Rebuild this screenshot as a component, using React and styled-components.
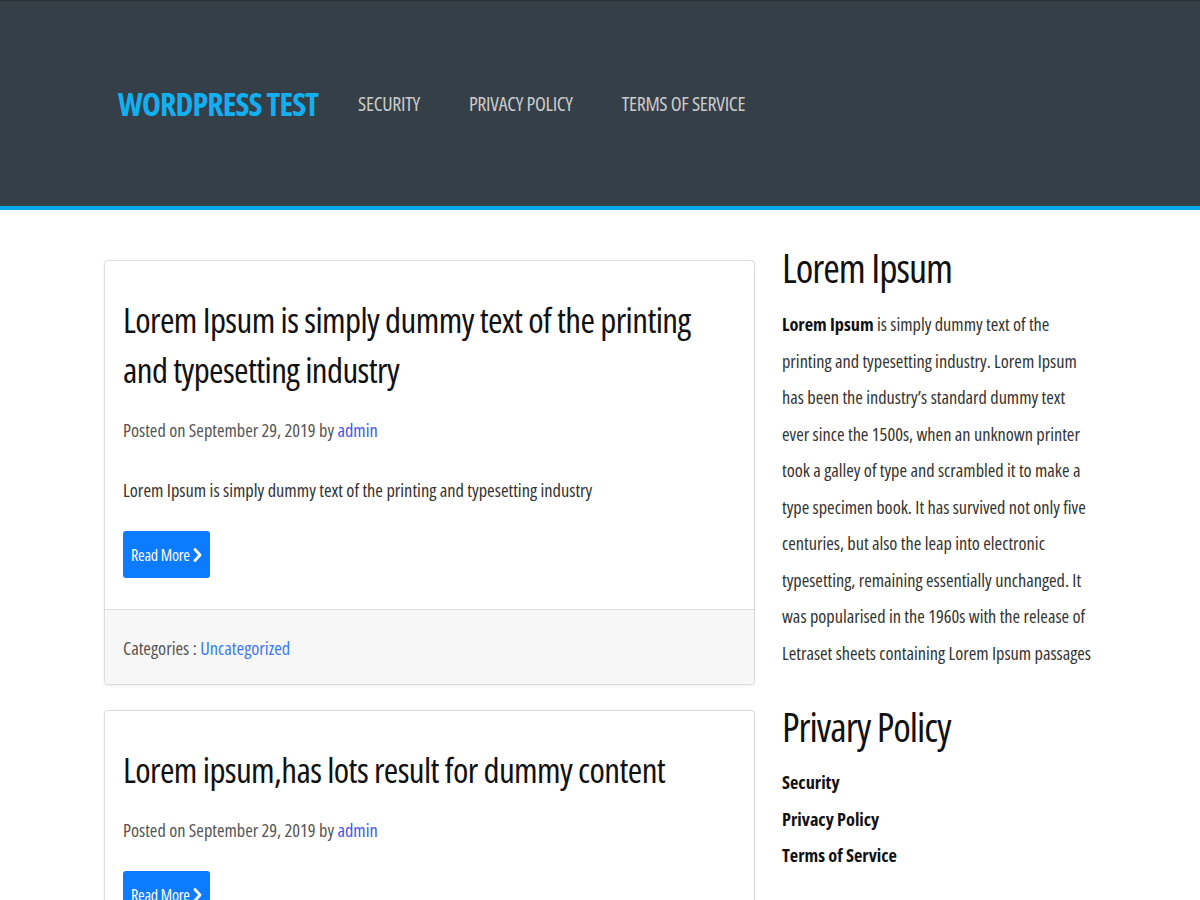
import React from 'react'
import styled, { createGlobalStyle } from 'styled-components'

const GlobalStyle = createGlobalStyle`
  body {
    margin: 0;
    background: #fff;
    font-family: "Open Sans", "Liberation Sans", sans-serif;
    font-stretch: condensed;
    color: #333;
  }
  a { text-decoration: none; }
`

const Header = styled.header`
  display: flex;
  align-items: center;
  height: 210px;
  padding-left: 118px;
  background: #353f47;
  border-top: 1px solid #2b3339;
  border-bottom: 4px solid #09a9ee;
  box-sizing: border-box;
`

const Brand = styled.a`
  font-size: 32px;
  font-weight: 700;
  letter-spacing: -0.9px;
  color: #12b0f2;
  text-transform: uppercase;
  margin-right: 40px;
`

const Nav = styled.nav`
  display: flex;
  gap: 49px;
`

const NavLink = styled.a`
  font-size: 20px;
  letter-spacing: -0.3px;
  color: #c9cbcc;
  text-transform: uppercase;
`

const Container = styled.div`
  display: grid;
  grid-template-columns: 651px 313px;
  gap: 27px;
  margin: 50px 0 0 104px;
  align-items: start;
`

const Posts = styled.main`
  display: flex;
  flex-direction: column;
  gap: 25px;
`

const Card = styled.article`
  border: 1px solid #dcdcdc;
  border-radius: 4px;
  box-shadow: 0 1px 3px rgba(0, 0, 0, 0.08);
  background: #fff;
  overflow: hidden;
`

const CardBody = styled.div`
  padding: 34px 28px 31px 18px;
`

const PostTitle = styled.h2`
  margin: 0;
  font-size: 35px;
  letter-spacing: -0.6px;
  line-height: 50px;
  font-weight: 400;
  color: #111;
`

const Meta = styled.p`
  margin: 21px 0 0;
  font-size: 18.3px;
  line-height: 27px;
  color: #555;
`

const Link = styled.a`
  color: ${p => p.$tone || '#3a7af8'};
`

const Excerpt = styled.p`
  margin: 33px 0 0;
  font-size: 18.4px;
  line-height: 27px;
  color: #333;
`

const ReadMore = styled.a`
  display: inline-flex;
  align-items: center;
  gap: 3px;
  margin-top: 28px;
  height: 47px;
  padding: 0 8px;
  box-sizing: border-box;
  background: #0d7bff;
  border-radius: 3px;
  color: #fff;
  font-size: 16px;
  letter-spacing: -0.2px;
`

const CardFooter = styled.footer`
  padding: 24px 18px 23px;
  background: #f7f7f7;
  border-top: 1px solid #dcdcdc;
  font-size: 18.4px;
  line-height: 27px;
  color: #555;
`

const Sidebar = styled.aside`
  display: flex;
  flex-direction: column;
  margin-top: -20px;
`

const WidgetSection = styled.section`
  margin-bottom: ${p => p.$gap || 0}px;
`

const WidgetTitle = styled.h3`
  margin: 0;
  font-size: 40px;
  letter-spacing: -1px;
  line-height: 56px;
  font-weight: 400;
  color: #111;
`

const WidgetText = styled.p`
  margin: 10px 0 0;
  font-size: 18.3px;
  line-height: 36.5px;
  color: #333;

  strong { color: #111; }
`

const WidgetLinks = styled.ul`
  list-style: none;
  margin: 9px 0 0;
  padding: 0;
`

const WidgetLink = styled.li`
  font-size: 18.3px;
  line-height: 36.5px;
  font-weight: 700;
  color: #111;
`

const Chevron = () => (
  <svg width="9" height="14" viewBox="0 0 9 14" aria-hidden="true">
    <path d="M2 1.5 L7 7 L2 12.5" fill="none" stroke="#fff" strokeWidth="2.8" strokeLinecap="round" strokeLinejoin="round" />
  </svg>
)

const posts = [
  {
    id: 1,
    title: 'Lorem Ipsum is simply dummy text of the printing and typesetting industry',
    excerpt: 'Lorem Ipsum is simply dummy text of the printing and typesetting industry',
    footer: true
  },
  {
    id: 2,
    title: 'Lorem ipsum,has lots result for dummy content',
    excerpt: null,
    footer: false
  }
]

export default function App() {
  return (
    <>
      <GlobalStyle />
      <Header>
        <Brand href="#">WordPress Test</Brand>
        <Nav>
          <NavLink href="#">Security</NavLink>
          <NavLink href="#">Privacy Policy</NavLink>
          <NavLink href="#">Terms of Service</NavLink>
        </Nav>
      </Header>
      <Container>
        <Posts>
          {posts.map(post => (
            <Card key={post.id}>
              <CardBody>
                <PostTitle>{post.title}</PostTitle>
                <Meta>
                  Posted on September 29, 2019 by <Link href="#" $tone="#4650ff">admin</Link>
                </Meta>
                {post.excerpt && <Excerpt>{post.excerpt}</Excerpt>}
                <div>
                  <ReadMore href="#">Read More <Chevron /></ReadMore>
                </div>
              </CardBody>
              {post.footer && (
                <CardFooter>
                  Categories : <Link href="#">Uncategorized</Link>
                </CardFooter>
              )}
            </Card>
          ))}
        </Posts>
        <Sidebar>
          <WidgetSection $gap={28}>
            <WidgetTitle>Lorem Ipsum</WidgetTitle>
            <WidgetText>
              <strong>Lorem Ipsum</strong> is simply dummy text of the printing and typesetting
              industry. Lorem Ipsum has been the industry’s standard dummy text ever since the
              1500s, when an unknown printer took a galley of type and scrambled it to make a type
              specimen book. It has survived not only five centuries, but also the leap into
              electronic typesetting, remaining essentially unchanged. It was popularised in the
              1960s with the release of Letraset sheets containing Lorem Ipsum passages
            </WidgetText>
          </WidgetSection>
          <WidgetSection>
            <WidgetTitle>Privary Policy</WidgetTitle>
            <WidgetLinks>
              <WidgetLink>Security</WidgetLink>
              <WidgetLink>Privacy Policy</WidgetLink>
              <WidgetLink>Terms of Service</WidgetLink>
            </WidgetLinks>
          </WidgetSection>
        </Sidebar>
      </Container>
    </>
  )
}
